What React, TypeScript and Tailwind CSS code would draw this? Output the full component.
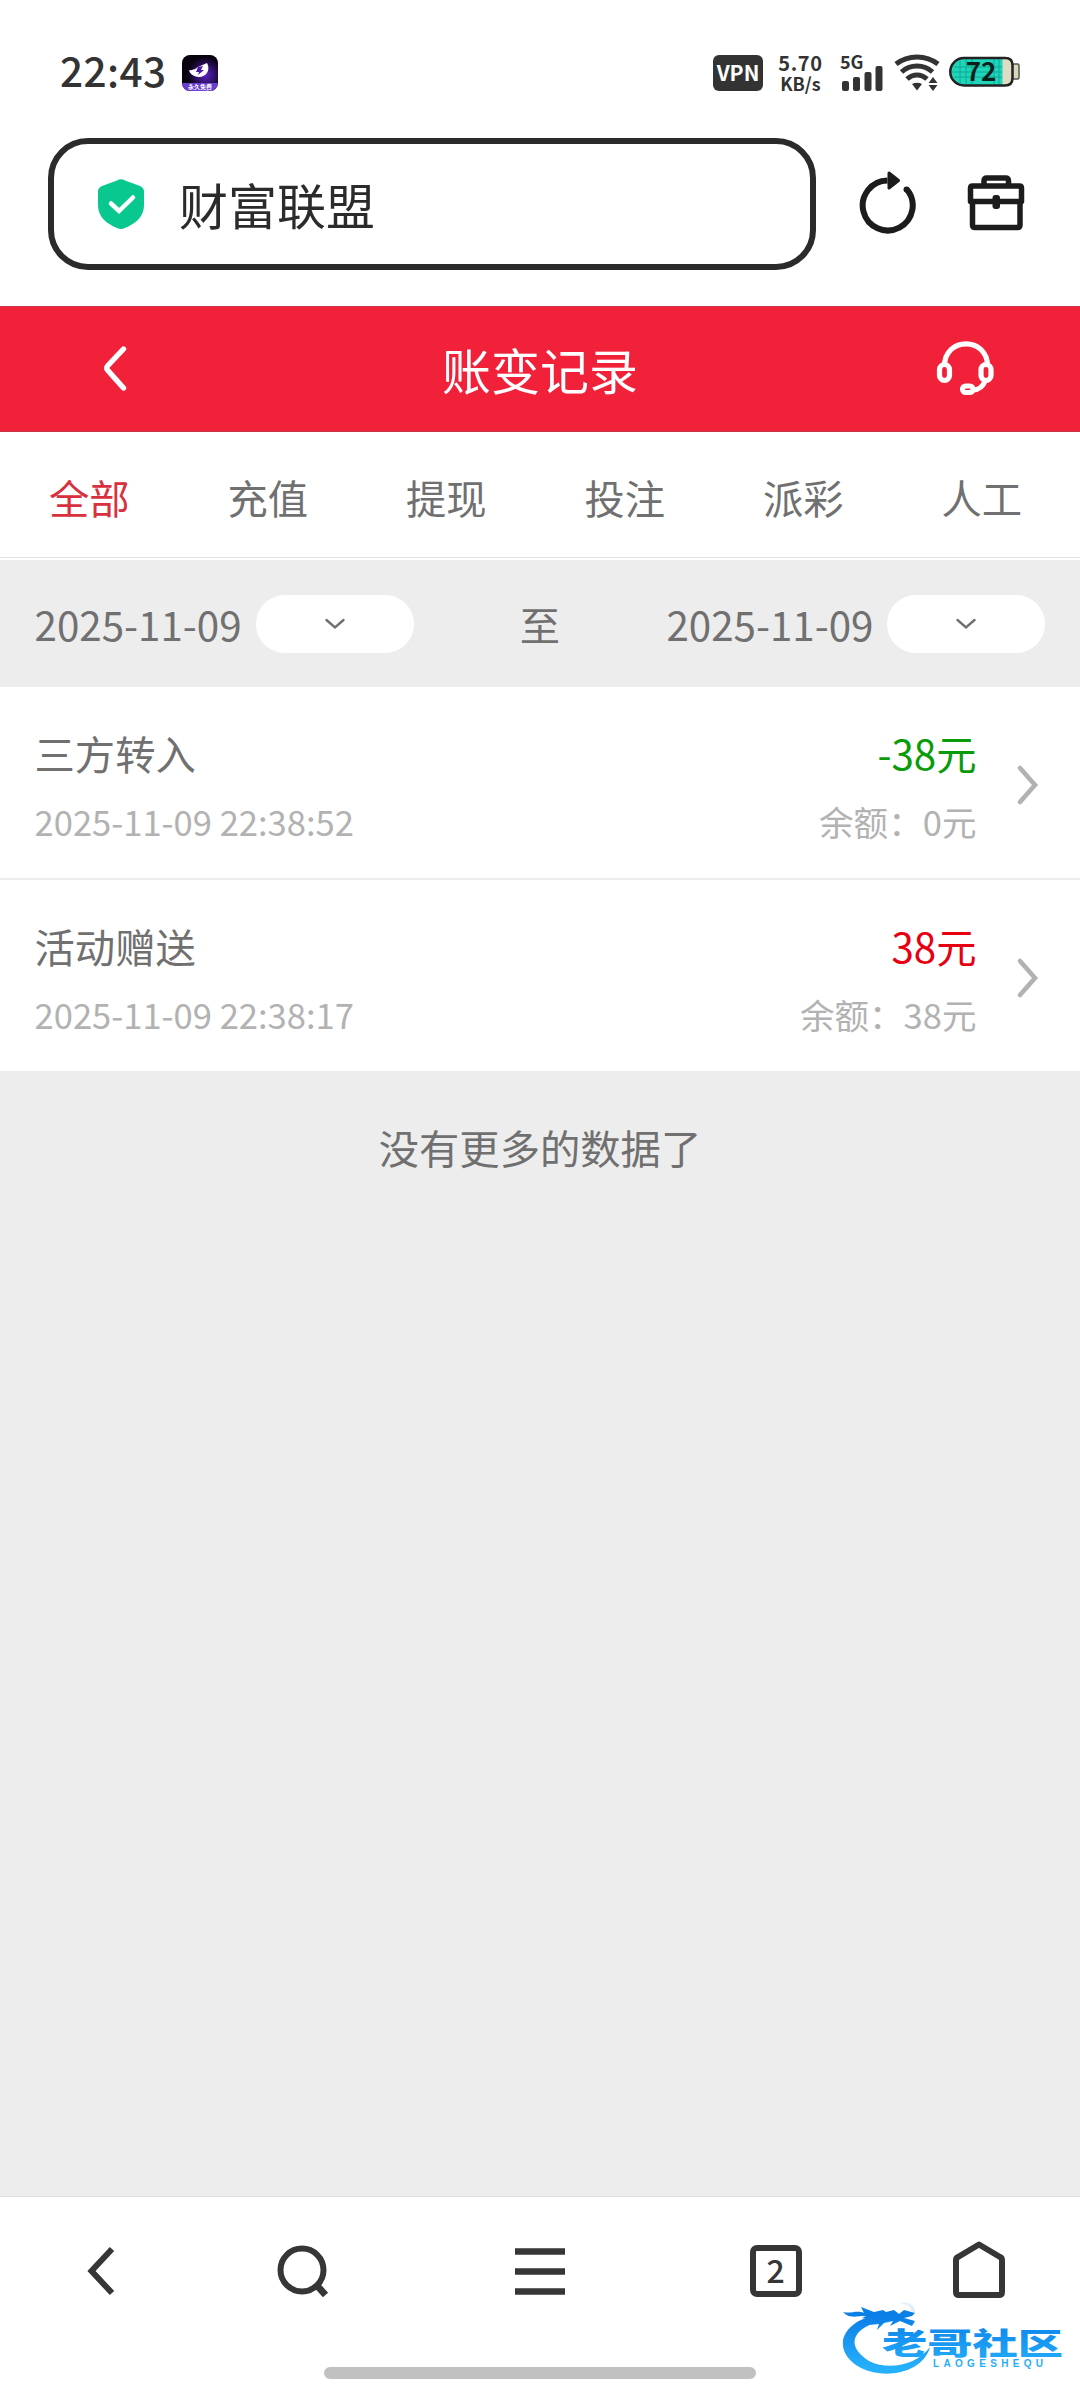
import React from "react";

const tabs = ["全部", "充值", "提现", "投注", "派彩", "人工"];

const records = [
  {
    title: "三方转入",
    time: "2025-11-09 22:38:52",
    amount: "-38元",
    balance: "余额：0元",
    income: false,
  },
  {
    title: "活动赠送",
    time: "2025-11-09 22:38:17",
    amount: "38元",
    balance: "余额：38元",
    income: true,
  },
];

const AppBadge = () => (
  <svg width="36" height="36" viewBox="0 0 36 36" className="ml-[16px] -mt-[1px]">
    <defs>
      <clipPath id="badge">
        <rect width="36" height="36" rx="8" />
      </clipPath>
      <radialGradient id="glow" cx="0.65" cy="0.55" r="0.5">
        <stop offset="0" stopColor="#5b22c4" />
        <stop offset="1" stopColor="#08020f" />
      </radialGradient>
    </defs>
    <g clipPath="url(#badge)">
      <rect width="36" height="36" fill="url(#glow)" />
      <path d="M7 15 Q12 16 16 12 L25 8 C29 15 24 22 17 22 C11 21.500 8 19 7 15Z" fill="#fff" />
      <path d="M16 12 L21 11 L19 15 L22 15 L16 20 L17 17 L14 17Z" fill="#4a1ba8" />
      <rect y="28" width="36" height="8" fill="#6a3fd0" />
      <text
        x="18"
        y="33.500"
        fontSize="6"
        fontWeight="700"
        textAnchor="middle"
        fill="#fff"
        fontFamily="Noto Sans CJK SC, sans-serif"
      >
        永久免费
      </text>
    </g>
  </svg>
);

const Wifi = () => (
  <svg width="46" height="38" viewBox="0 0 46 38" fill="none" className="ml-[11px]">
    <g stroke="#333" strokeWidth="5">
      <path d="M2 10 C14 0.500 32 0.500 44 10" />
      <path d="M7.500 18 C16 10 30 10 38.500 18" />
      <path d="M13 25 C19 19.500 27 19.500 33 25" />
    </g>
    <path d="M18 30 Q23 27.500 28 30 L23 36.500Z" fill="#333" />
    <path d="M34.500 29 L39 23 L43.500 29Z M34.500 31 L39 37 L43.500 31Z" fill="#333" />
  </svg>
);

const Battery = () => (
  <svg width="74" height="32" viewBox="0 0 74 32" className="ml-2 -mt-[2px] overflow-visible">
    <rect x="64" y="8" width="7" height="15" rx="1.500" fill="#d9d8b8" stroke="#555" strokeWidth="1.500" />
    <path d="M16 2 H57 Q64.500 2 64.500 9 V22 Q64.500 29.500 57 29.500 H16 A13.750 13.750 0 0 1 16 2Z" fill="#dedcc4" />
    <path d="M16 2 H54.500 V29.500 H16 A13.750 13.750 0 0 1 16 2Z" fill="#1fd5ba" />
    <path
      d="M6 11 H54 M4 16 H54 M6 21 H54 M12 5 V27 M18 3 V28 M24 3 V28 M46 3 V28 M51 3 V28"
      stroke="#0ea893"
      strokeWidth="1"
    />
    <path
      d="M16 2 H57 Q64.500 2 64.500 9 V22 Q64.500 29.500 57 29.500 H16 A13.750 13.750 0 0 1 16 2Z"
      fill="none"
      stroke="#222"
      strokeWidth="2.500"
    />
    <text
      x="33"
      y="25"
      fontSize="26"
      fontWeight="700"
      textAnchor="middle"
      fill="#0b1f1c"
      fontFamily="Noto Sans CJK SC, sans-serif"
    >
      72
    </text>
  </svg>
);

const StatusBar = () => (
  <div className="h-[138px] pt-[8px] pl-[60px] pr-[58px] flex items-center text-[#333]">
    <span className="text-[40.500px] leading-none font-medium tracking-[0.4px] -mt-[5px]">22:43</span>
    <AppBadge />
    <div className="ml-auto flex items-center">
      <span className="w-[50px] h-9 rounded-md bg-[#333] text-white text-[21px] font-bold flex items-center justify-center">
        VPN
      </span>
      <div className="ml-4 w-[43px] -mt-[1px] flex flex-col items-center text-[20px] font-bold leading-[20px] whitespace-nowrap">
        <span className="tracking-[0.6px]">5.70</span>
        <span className="text-[18px]">KB/s</span>
      </div>
      <div className="ml-[18px] relative w-[43px] h-9">
        <span className="absolute left-0 -top-[3px] text-[18px] leading-[18px] font-bold">5G</span>
        <svg width="43" height="36" viewBox="0 0 43 36" fill="#333">
          <rect x="2" y="26" width="7" height="10" rx="2" />
          <rect x="13" y="22" width="7" height="14" rx="2" />
          <rect x="24.500" y="17" width="7" height="19" rx="2" />
          <rect x="35.500" y="11" width="7" height="25" rx="2" />
        </svg>
      </div>
      <Wifi />
      <Battery />
    </div>
  </div>
);

const AddressBar = () => (
  <div className="h-[168px] pl-12 flex items-start text-[#1c1c1c]">
    <div className="w-[768px] h-[132px] rounded-[40px] border-[6px] border-[#2b2b2b] flex items-center pl-[43px]">
      <svg width="48" height="52" viewBox="0 0 48 52" fill="none">
        <path
          d="M20 2.500 Q24 0 28 2.500 L43 8 Q47 9.500 47 13.500 V27 C47 40 37 46 28 50 Q24 52 20 50 C11 46 1 40 1 27 V13.500 Q1 9.500 5 8Z"
          fill="#09c88f"
        />
        <path d="M14 25.500 L22 33 L36 19.500" stroke="#fff" strokeWidth="4.500" strokeLinecap="round" />
      </svg>
      <span className="ml-[34px] -mt-[1px] text-[49px] leading-none text-[#2b2b2b]">财富联盟</span>
    </div>
    <svg width="60" height="66" viewBox="0 0 60 66" fill="none" className="ml-[42px] mt-[31px]">
      <path d="M29.500 11.500 A25 25 0 1 0 48.500 20" stroke="#1c1c1c" strokeWidth="6" />
      <circle cx="48.500" cy="20.500" r="3" fill="#1c1c1c" />
      <path d="M31 4 L40.500 11.500 L31 19Z" fill="#1c1c1c" stroke="#1c1c1c" strokeWidth="3" strokeLinejoin="round" />
    </svg>
    <svg
      width="58"
      height="58"
      viewBox="0 0 58 58"
      fill="none"
      stroke="#1c1c1c"
      strokeWidth="5.500"
      strokeLinejoin="round"
      className="ml-[49px] mt-[37px]"
    >
      <path d="M17 11 V6 Q17 3 20 3 H38.500 Q41.500 3 41.500 6 V11" />
      <path d="M3.500 26.500 V13 Q3.500 11 5.500 11 H52.500 Q54.500 11 54.500 13 V26.500Z" />
      <path d="M5.500 26.500 V50 Q5.500 52.500 8 52.500 H50.500 Q53 52.500 53 50 V26.500" />
      <rect x="25.500" y="20" width="7.500" height="14" rx="3" fill="#1c1c1c" stroke="none" />
    </svg>
  </div>
);

const Header = () => (
  <div className="h-[126px] bg-[#f2213a] border-y border-[#c23a48] text-white flex items-center justify-between pl-[102px] pr-[85px]">
    <svg width="28" height="48" viewBox="0 0 28 48" fill="none">
      <path d="M21.500 4 L5.500 21 Q4 23 5.500 25 L21.500 43" stroke="#fff" strokeWidth="5.400" strokeLinecap="round" />
    </svg>
    <h1 className="text-[48.960px] leading-none ml-[15px]">账变记录</h1>
    <svg width="60" height="58" viewBox="0 0 60 58" fill="none" stroke="#fff" strokeWidth="5.200">
      <path d="M9.500 26 C9.500 -3.500 52.500 -3.500 52.500 26" />
      <rect x="4.500" y="24.500" width="10" height="16" rx="5" />
      <rect x="46" y="24.500" width="10" height="16" rx="5" />
      <path d="M50 41 Q47 49.500 38 50" />
      <rect x="27.500" y="46" width="10.500" height="6.500" rx="3.200" />
    </svg>
  </div>
);

const DatePicker = () => (
  <div className="flex items-center">
    <span>2025-11-09</span>
    <span className="ml-[14px] w-[158px] h-[58px] -mt-[2px] rounded-[28.800px] bg-white flex items-center justify-center">
      <svg width="20" height="12" viewBox="0 0 20 12" fill="none" stroke="#707070" strokeWidth="2.400">
        <path d="M1.500 2 L10 9.500 L18.500 2" strokeLinecap="round" />
      </svg>
    </span>
  </div>
);

const BottomNav = () => (
  <div className="relative h-[204px] bg-white border-t border-[#e0e0e0] flex flex-col items-center text-[#363636]">
    <div className="w-full h-[148px] grid grid-cols-[202px_201px_274px_197px_1fr] items-center justify-items-center">
      <svg width="30" height="50" viewBox="0 0 30 50" fill="none" stroke="currentColor" strokeWidth="6">
        <path d="M26 3 L5.500 25 L26 47" />
      </svg>
      <svg width="54" height="54" viewBox="0 0 54 54" fill="none" stroke="currentColor" strokeWidth="6">
        <circle cx="26" cy="26" r="21.500" />
        <path d="M39.500 40 L49.500 51" strokeWidth="7" />
      </svg>
      <svg width="50" height="48" viewBox="0 0 50 48" stroke="currentColor" strokeWidth="6.500">
        <path d="M0 4.500 H50 M0 24.500 H50 M0 44.500 H50" />
      </svg>
      <span className="w-[52px] h-[52px] rounded-[7px] border-[6px] border-[#363636] flex items-center justify-center text-[32px] leading-none font-medium">
        <span className="-mt-[4px]">2</span>
      </span>
      <svg width="54" height="58" viewBox="0 0 54 58" fill="none" stroke="currentColor" strokeWidth="6" className="ml-[4px] -mt-[2px]">
        <path
          d="M4 19 Q4 17 6 16 L27 3.500 L48 16 Q50 17 50 19 V51 Q50 54 47 54 H7 Q4 54 4 51Z"
          strokeLinejoin="round"
        />
      </svg>
    </div>
    <div className="mt-[22px] w-[432px] h-3 rounded-full bg-[#c1c1c1]" />
    {/* Community watermark */}
    <svg width="224" height="78" viewBox="0 0 224 78" className="absolute left-[841px] top-[104px]">
      <defs>
        <linearGradient id="blue" x1="0" y1="0" x2="0" y2="78" gradientUnits="userSpaceOnUse">
          <stop offset="0.200" stopColor="#0b7fe8" />
          <stop offset="0.850" stopColor="#25b0fb" />
        </linearGradient>
      </defs>
      <g fill="url(#blue)">
        <path d="M31 15 C-3 24 -8 52 20 67 C44 79 82 72 89 46 C76 64 48 70 28 60 C7 47 9 31 33 22Z" />
        <path d="M2 11 C9 13 16 9 23 12 L20 6 L33 11 L42 9 L45 11 L53 9 L58 13 L63 9 L74 12 L71 15 L63 17 L74 20 L71 25 L59 20 L49 25 L52 20 L43 22 L36 29 L38 23 L28 24 L31 19 L21 17 L25 15 C15 15 8 18 2 11Z" />
        <path d="M58 2 C67 0 75 4 74 12 L70 10 C70 5 65 3 58 2Z" opacity="0.120" />
        <text
          x="41"
          y="52.500"
          fontSize="29.500"
          fontWeight="900"
          textLength="181"
          lengthAdjust="spacingAndGlyphs"
          fontFamily="Noto Sans CJK SC, sans-serif"
        >
          老哥社区
        </text>
        <text x="92" y="66" fontSize="10" fontWeight="700" textLength="110" fontFamily="Liberation Sans, sans-serif">
          LAOGESHEQU
        </text>
      </g>
    </svg>
  </div>
);

const App = () => {
  return (
    <div className="w-[1080px] h-[2400px] flex flex-col bg-white overflow-hidden font-['Noto_Sans_CJK_SC',sans-serif]">
      <StatusBar />
      <AddressBar />
      <Header />

      {/* Category tabs */}
      <div className="h-[126px] pt-[5px] flex items-center border-b border-[#e2e2e2] text-[40.320px] leading-none text-[#707070]">
        {tabs.map((tab, i) => (
          <span key={tab} className={`w-[178.500px] text-center ${i === 0 ? "text-[#d9303e]" : ""}`}>
            {tab}
          </span>
        ))}
      </div>

      <div className="flex-1 border-t-2 border-white bg-[#ededed] text-[40.320px] leading-none text-[#707070]">
        {/* Date range */}
        <div className="h-[127px] pt-[2px] px-[34.560px] flex items-center justify-between">
          <DatePicker />
          <span>至</span>
          <DatePicker />
        </div>

        {records.map((record) => (
          <div
            key={record.time}
            className="h-[193px] px-[34.560px] pt-[6px] bg-white border-b-2 border-[#ededed] flex items-center"
          >
            <div className="flex-1 flex flex-col gap-[31px]">
              <span>{record.title}</span>
              <span className="text-[34.560px] text-[#b2b2b2]">{record.time}</span>
            </div>
            <div className="flex flex-col items-end gap-[31px]">
              <span className={record.income ? "text-[#e60012]" : "text-[#0a9b0a]"}>{record.amount}</span>
              <span className="text-[34.560px] text-[#b2b2b2]">{record.balance}</span>
            </div>
            <svg width="24" height="42" viewBox="0 0 24 42" fill="none" className="ml-[40px] mr-[5px] -mt-[2px]">
              <path d="M4 4 L19 21 L4 38" stroke="#b2b2b2" strokeWidth="4.600" strokeLinecap="round" />
            </svg>
          </div>
        ))}

        <p className="mt-[54px] text-center">没有更多的数据了</p>
      </div>

      <BottomNav />
    </div>
  );
};

export default App;
